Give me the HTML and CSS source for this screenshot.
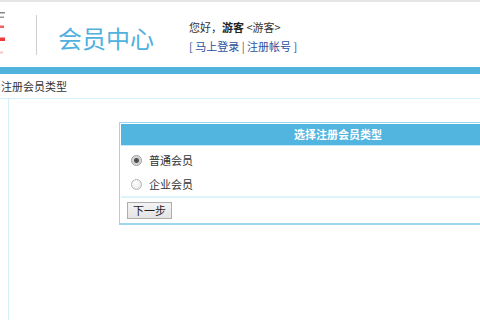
FILE: index.html
```html
<!DOCTYPE html>
<html lang="zh-CN">
<head>
<meta charset="utf-8">
<title>会员中心 - 注册会员类型</title>
<link rel="stylesheet" href="styles.css">
</head>
<body>
<div class="topline"></div>
<header class="head">
  <div class="logo">
    <svg width="6" height="56" viewBox="0 0 6 56" aria-hidden="true">
      <rect x="0" y="10" width="5" height="1.5" fill="#888"/>
      <rect x="0" y="14.5" width="4" height="1.5" fill="#999"/>
      <rect x="0" y="23.5" width="4" height="2.5" fill="#f26060"/>
      <rect x="0" y="35.5" width="5" height="3.5" fill="#ee3a3a"/>
      <rect x="0" y="49.5" width="3" height="2" fill="#f8c8c8"/>
    </svg>
  </div>
  <div class="divider"></div>
  <h1 class="title">会员中心</h1>
  <div class="user">
    <p class="greet">您好，<b>游客</b> &lt;游客&gt;</p>
    <p class="links">[ <a href="#">马上登录</a> <span class="sep">|</span> <a href="#">注册帐号</a> ]</p>
  </div>
</header>
<div class="bluebar"></div>
<div class="crumb">注册会员类型</div>
<div class="main">
  <div class="side"></div>
  <div class="content">
    <form class="panel">
      <div class="panel-head">选择注册会员类型</div>
      <div class="panel-body">
        <label class="row"><input type="radio" name="t" checked><span>普通会员</span></label>
        <label class="row"><input type="radio" name="t"><span>企业会员</span></label>
      </div>
      <div class="panel-foot">
        <button type="button" class="btn">下一步</button>
      </div>
    </form>
  </div>
</div>
</body>
</html>
```
FILE: styles.css
```css
html, body {
  margin: 0;
  padding: 0;
  width: 480px;
  height: 320px;
  overflow: hidden;
  background: #fff;
}
body {
  font-family: "Noto Sans CJK SC", "Liberation Sans", sans-serif;
  font-size: 11px;
  color: #333;
  display: flex;
  flex-direction: column;
}
p, h1 { margin: 0; }

.topline {
  height: 2px;
  background: #e6e6e6;
  flex: none;
}
.head {
  height: 65px;
  flex: none;
  display: flex;
  align-items: flex-start;
}
.logo {
  width: 36px;
  flex: none;
}
.logo svg { display: block; }
.divider {
  width: 1px;
  height: 40px;
  margin-top: 13px;
  background: #cfcfcf;
  flex: none;
}
.title {
  margin: 24px 0 0 21px;
  font-size: 24px;
  line-height: 24px;
  font-weight: normal;
  color: #50b1de;
  white-space: nowrap;
}
.user {
  margin: 16px 0 0 35px;
  line-height: 19px;
  white-space: nowrap;
}
.greet b { font-weight: bold; color: #222; }
.links { color: #2b4f9c; }
.links a { color: #2b4f9c; text-decoration: none; }
.links .sep { color: #555; }

.bluebar {
  height: 7px;
  background: #4fb3dc;
  flex: none;
}
.crumb {
  height: 24px;
  line-height: 24px;
  padding-left: 1px;
  flex: none;
  color: #333;
}
.main {
  flex: 1;
  display: flex;
  border-top: 1px solid #d3f1fb;
  overflow: hidden;
}
.side {
  width: 8px;
  border-right: 1px solid #d3f1fb;
  flex: none;
}
.content {
  flex: 1;
  min-width: 0;
  overflow: hidden;
  padding: 23px 0 0 110px;
}
.panel {
  width: 434px;
  margin: 0;
  border: 1px solid #9dd6ee;
  border-bottom-width: 2px;
  padding: 1px 1px 0;
  background: #fff;
}
.panel-head {
  height: 21px;
  line-height: 21px;
  background: #52b5df;
  color: #fff;
  font-weight: bold;
  text-align: center;
  border-bottom: 1px solid #c4e8f6;
}
.panel-body {
  padding: 2px 0 0 10px;
  border-bottom: 2px solid #dcf4fc;
}
.row {
  height: 24px;
  display: flex;
  align-items: center;
  gap: 7px;
}
.row input {
  appearance: none;
  -webkit-appearance: none;
  margin: 0;
  width: 11px;
  height: 11px;
  border-radius: 50%;
  border: 1px solid #b4b4b4;
  background: radial-gradient(circle at 40% 35%, #fff 0%, #eaeaea 70%, #d8d8d8 100%);
  box-sizing: border-box;
}
.row input:checked {
  border-color: #9a9a9a;
  background: radial-gradient(circle, #444 0, #555 2px, #cfcfcf 3px, #e6e6e6 5px);
}
.panel-foot {
  height: 25px;
  padding: 4px 0 0 6px;
  box-sizing: border-box;
}
.btn {
  height: 17px;
  width: 45px;
  padding: 0;
  font: inherit;
  font-size: 11px;
  line-height: 15px;
  color: #222;
  border: 1px solid #adadad;
  border-radius: 0;
  background: linear-gradient(#f4f4f4, #e4e4e4);
  display: block;
}
```
